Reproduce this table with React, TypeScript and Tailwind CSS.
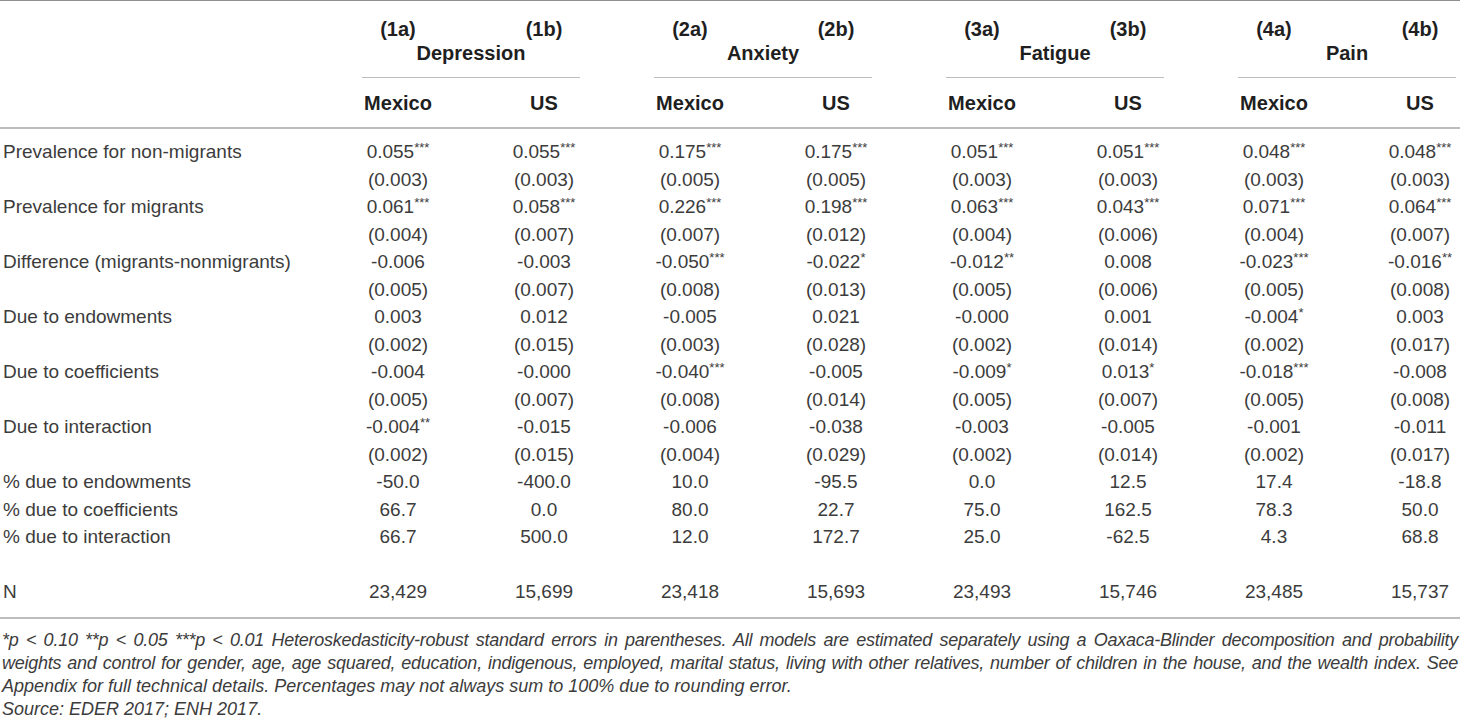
import React from "react";

type Row = { label: string; values: string[]; se?: string[] };

const rows: Row[] = [
  {
    label: "Prevalence for non-migrants",
    values: ["0.055***", "0.055***", "0.175***", "0.175***", "0.051***", "0.051***", "0.048***", "0.048***"],
    se: ["(0.003)", "(0.003)", "(0.005)", "(0.005)", "(0.003)", "(0.003)", "(0.003)", "(0.003)"],
  },
  {
    label: "Prevalence for migrants",
    values: ["0.061***", "0.058***", "0.226***", "0.198***", "0.063***", "0.043***", "0.071***", "0.064***"],
    se: ["(0.004)", "(0.007)", "(0.007)", "(0.012)", "(0.004)", "(0.006)", "(0.004)", "(0.007)"],
  },
  {
    label: "Difference (migrants-nonmigrants)",
    values: ["-0.006", "-0.003", "-0.050***", "-0.022*", "-0.012**", "0.008", "-0.023***", "-0.016**"],
    se: ["(0.005)", "(0.007)", "(0.008)", "(0.013)", "(0.005)", "(0.006)", "(0.005)", "(0.008)"],
  },
  {
    label: "Due to endowments",
    values: ["0.003", "0.012", "-0.005", "0.021", "-0.000", "0.001", "-0.004*", "0.003"],
    se: ["(0.002)", "(0.015)", "(0.003)", "(0.028)", "(0.002)", "(0.014)", "(0.002)", "(0.017)"],
  },
  {
    label: "Due to coefficients",
    values: ["-0.004", "-0.000", "-0.040***", "-0.005", "-0.009*", "0.013*", "-0.018***", "-0.008"],
    se: ["(0.005)", "(0.007)", "(0.008)", "(0.014)", "(0.005)", "(0.007)", "(0.005)", "(0.008)"],
  },
  {
    label: "Due to interaction",
    values: ["-0.004**", "-0.015", "-0.006", "-0.038", "-0.003", "-0.005", "-0.001", "-0.011"],
    se: ["(0.002)", "(0.015)", "(0.004)", "(0.029)", "(0.002)", "(0.014)", "(0.002)", "(0.017)"],
  },
  {
    label: "% due to endowments",
    values: ["-50.0", "-400.0", "10.0", "-95.5", "0.0", "12.5", "17.4", "-18.8"],
  },
  {
    label: "% due to coefficients",
    values: ["66.7", "0.0", "80.0", "22.7", "75.0", "162.5", "78.3", "50.0"],
  },
  {
    label: "% due to interaction",
    values: ["66.7", "500.0", "12.0", "172.7", "25.0", "-62.5", "4.3", "68.8"],
  },
];

const nRow = ["23,429", "15,699", "23,418", "15,693", "23,493", "15,746", "23,485", "15,737"];

const models = ["(1a)", "(1b)", "(2a)", "(2b)", "(3a)", "(3b)", "(4a)", "(4b)"];
const groups = ["Depression", "Anxiety", "Fatigue", "Pain"];

function Val({ v }: { v: string }) {
  const m = v.match(/^([^*]*)(\*+)?$/);
  const num = m ? m[1] : v;
  const stars = m && m[2] ? m[2] : "";
  return (
    <span className="whitespace-nowrap">
      {num}
      {stars && <span className="relative top-[-6px] text-[13px] leading-none">{stars}</span>}
    </span>
  );
}

const grid = "grid grid-cols-[325px_repeat(8,146px)]";

export default function App() {
  return (
    <div className="w-[1460px] h-[723px] overflow-hidden bg-white font-['Liberation_Sans',Arial,sans-serif] text-[#3c3c3c]">
      <div className="w-[1493px]">
        {/* Header */}
        <div className="border-t border-[#8f8f8f] border-b-2 border-b-[#bdbdbd] text-[20px] font-bold text-[#1f1f1f]">
          <div className={`${grid} pt-[16px] leading-[24px]`}>
            <div />
            {models.map((m) => (
              <div key={m} className="text-center">
                {m}
              </div>
            ))}
          </div>
          <div className={`${grid} leading-[24px]`}>
            <div />
            {groups.map((g) => (
              <div key={g} className="col-span-2 flex flex-col items-center">
                <span>{g}</span>
                <div className="mt-[12px] w-[calc(100%-74px)] border-t border-[#bdbdbd]" />
              </div>
            ))}
          </div>
          <div className={`${grid} pt-[13px] pb-[12px] leading-[24px]`}>
            <div />
            {models.map((m, i) => (
              <div key={m} className="text-center">
                {i % 2 === 0 ? "Mexico" : "US"}
              </div>
            ))}
          </div>
        </div>

        {/* Body */}
        <div className="border-b-2 border-[#bdbdbd] pt-[9px] pb-[11px] text-[19px] leading-[27.5px]">
          {rows.map((r) => (
            <React.Fragment key={r.label}>
              <div className={`${grid} h-[27.5px]`}>
                <div className="pl-[3px] whitespace-nowrap">{r.label}</div>
                {r.values.map((v, i) => (
                  <div key={i} className="text-center">
                    <Val v={v} />
                  </div>
                ))}
              </div>
              {r.se && (
                <div className={`${grid} h-[27.5px]`}>
                  <div />
                  {r.se.map((v, i) => (
                    <div key={i} className="text-center">
                      {v}
                    </div>
                  ))}
                </div>
              )}
            </React.Fragment>
          ))}
          <div className={`${grid} pt-[27.5px]`}>
            <div className="pl-[3px]">N</div>
            {nRow.map((v, i) => (
              <div key={i} className="text-center">
                {v}
              </div>
            ))}
          </div>
        </div>

        {/* Footnote */}
        <div className="w-[1458px] pt-[10px] pl-[2px] text-[18px] italic leading-[23px] text-[#3c3c3c]">
          <div className="text-justify [text-align-last:justify] tracking-[-0.25px]">
            *p &lt; 0.10 **p &lt; 0.05 ***p &lt; 0.01 Heteroskedasticity-robust standard errors in parentheses. All models are estimated separately using a Oaxaca-Blinder decomposition and probability
          </div>
          <div className="text-justify [text-align-last:justify] tracking-[-0.25px]">
            weights and control for gender, age, age squared, education, indigenous, employed, marital status, living with other relatives, number of children in the house, and the wealth index. See
          </div>
          <div>Appendix for full technical details. Percentages may not always sum to 100% due to rounding error.</div>
          <div>Source: EDER 2017; ENH 2017.</div>
        </div>
      </div>
    </div>
  );
}
